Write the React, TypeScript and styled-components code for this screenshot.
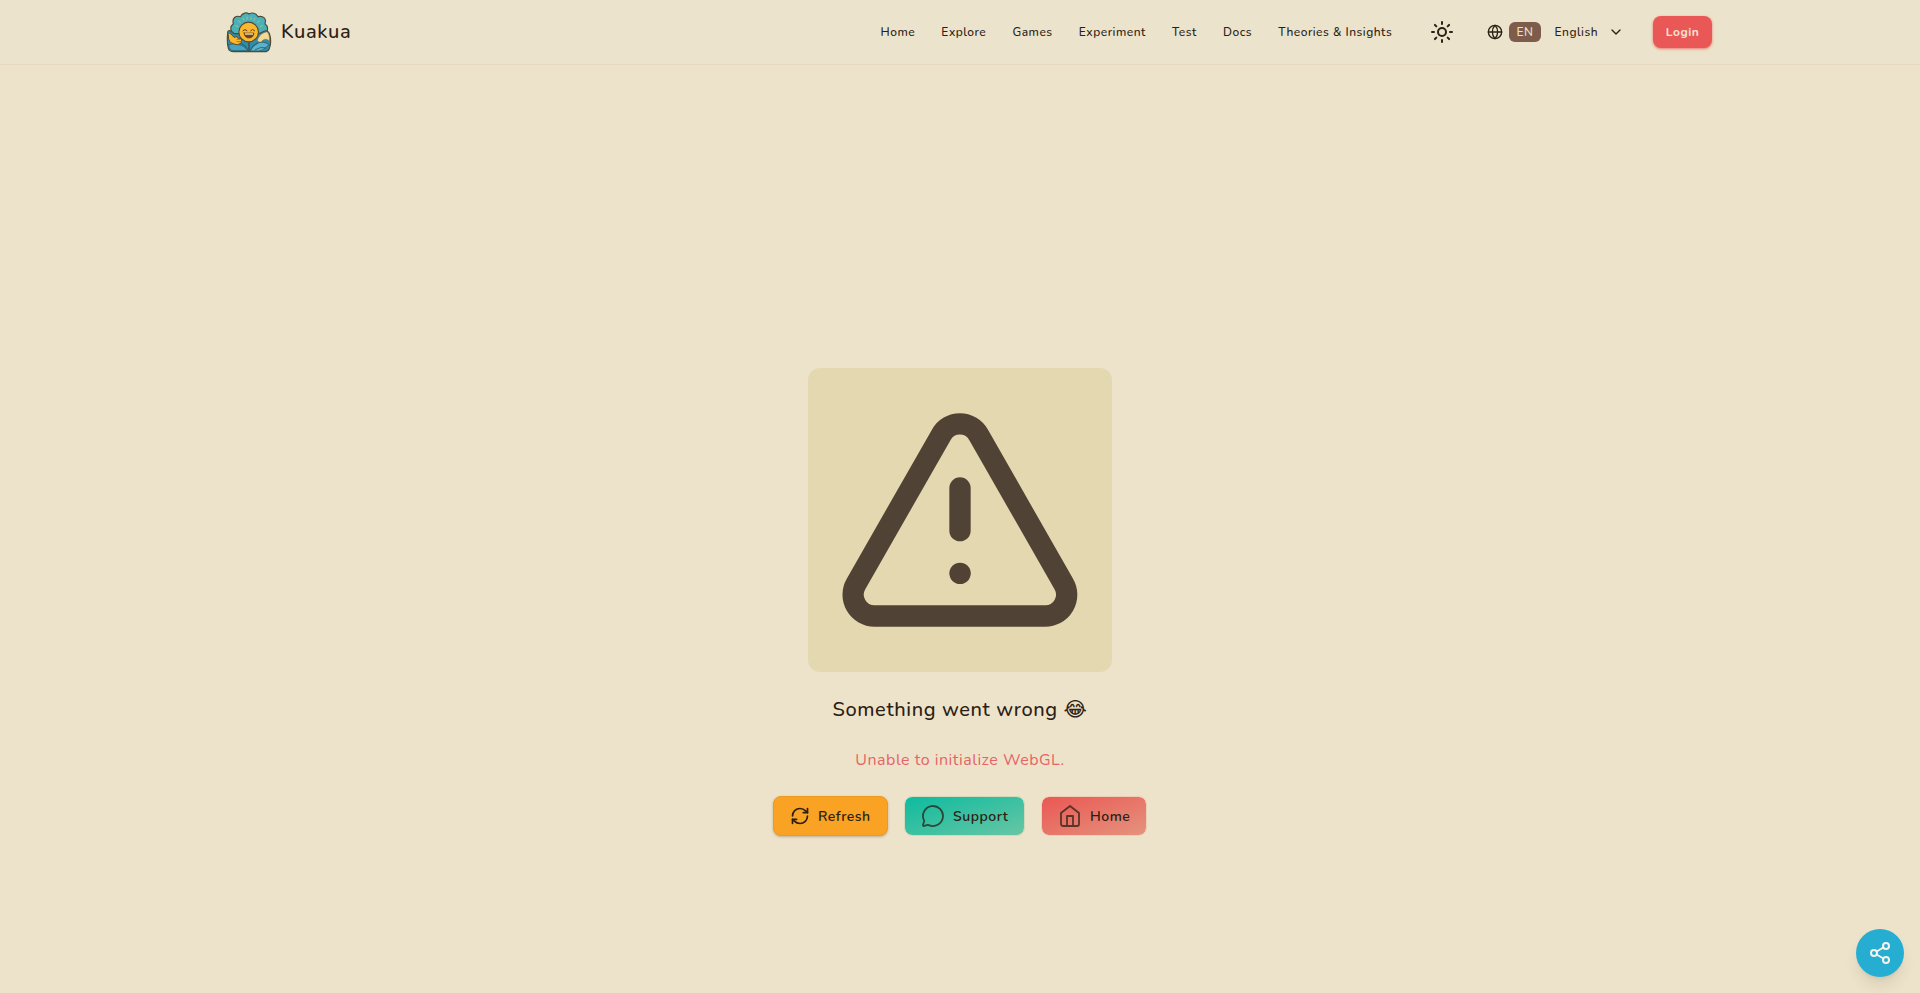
import React from "react";
import styled, { createGlobalStyle, css } from "styled-components";
import {
  ChevronDown,
  Globe,
  MessageCircle,
  RefreshCw,
  Share2,
  Sun,
  TriangleAlert,
} from "lucide-react";

const GlobalStyle = createGlobalStyle`
  *, *::before, *::after { box-sizing: border-box; }
  body {
    margin: 0;
    background: #ede3ca;
    color: #2b2013;
    font-family: Nunito, "Noto Sans", sans-serif;
    letter-spacing: 0.5px;
    overflow: hidden;
  }
  svg { display: block; flex-shrink: 0; }
`;

const Page = styled.div`
  display: flex;
  flex-direction: column;
  height: 100vh;
`;

const Header = styled.header`
  height: 65px;
  flex-shrink: 0;
  display: flex;
  align-items: center;
  justify-content: space-between;
  padding: 0 208px 0 226px;
  background: #ebe3cb;
  border-bottom: 1px solid #e5d8bf;
`;

const Brand = styled.a`
  display: flex;
  align-items: center;
  gap: 9px;
  font-size: 20px;
  line-height: 28px;
  font-weight: 500;
  letter-spacing: 0.6px;
`;

const HeaderEnd = styled.div`
  display: flex;
  align-items: center;
`;

const Nav = styled.nav`
  display: flex;
  gap: 26.2px;
`;

const NavLink = styled.a`
  font-size: 12px;
  line-height: 16px;
  font-weight: 500;
  white-space: nowrap;
`;

const ThemeButton = styled.button`
  display: flex;
  padding: 0;
  margin-left: 37.8px;
  border: 0;
  background: none;
  color: inherit;
`;

const LanguageButton = styled.button`
  display: flex;
  align-items: center;
  margin-left: 33px;
  padding: 0;
  border: 0;
  background: none;
  color: inherit;
  font: inherit;
  letter-spacing: inherit;
  font-size: 12px;
  line-height: 16px;
  font-weight: 500;
`;

const LanguageCode = styled.span`
  width: 32px;
  height: 20px;
  margin: 0 13.5px 0 6px;
  border-radius: 6px;
  background: #7d5c4b;
  color: #ece0cc;
  font-weight: 500;
  line-height: 20px;
  text-align: center;
`;

const LanguageName = styled.span`
  width: 53.5px;
  text-align: left;
`;

const LoginButton = styled.button`
  width: 59px;
  height: 32px;
  margin-left: 29px;
  padding: 0;
  border: 0;
  border-radius: 8px;
  background: #ea5757;
  box-shadow: 0 1px 3px rgba(234, 87, 87, 0.45), 0 1px 2px rgba(234, 87, 87, 0.4);
  color: #f7e4d3;
  font: inherit;
  letter-spacing: inherit;
  font-size: 12px;
  font-weight: 700;
`;

const Main = styled.main`
  flex: 1;
  display: flex;
  flex-direction: column;
  align-items: center;
  padding-top: 303px;
`;

const AlertPanel = styled.div`
  padding: 24px;
  border-radius: 12px;
  background: #e4d8b1;
  color: #504335;
`;

const Title = styled.h1`
  margin: 24px 0 0;
  height: 28px;
  font-size: 20px;
  line-height: 26px;
  font-weight: 500;
  letter-spacing: 0.6px;
`;

const Emoji = styled.span`
  font-family: "DejaVu Sans", sans-serif;
  font-weight: 400;
`;

const Message = styled.p`
  margin: 24px 0;
  font-size: 16px;
  line-height: 24px;
  color: #e56565;
`;

const Actions = styled.div`
  display: flex;
  gap: 16px;
`;

const tones = {
  refresh: css`
    background: #f9a223;
    border-color: #eb9a24;
    box-shadow: 0 1px 3px rgba(90, 60, 20, 0.18), 0 1px 2px rgba(90, 60, 20, 0.14);
  `,
  support: css`
    background: linear-gradient(to bottom right, #0dbb9f, #68c6a4) padding-box;
    border-color: #d3d9b9;
  `,
  home: css`
    background: linear-gradient(to bottom right, #ea5753, #e5937e) padding-box;
    border-color: #ecd0b5;
  `,
};

const ActionButton = styled.button<{ $tone: keyof typeof tones; $width: number }>`
  width: ${(p) => p.$width}px;
  height: 40px;
  display: flex;
  align-items: center;
  gap: 8px;
  padding: 0 0 0 16px;
  border: 1px solid;
  border-radius: 8px;
  color: #2b2013;
  font: inherit;
  letter-spacing: inherit;
  font-size: 14px;
  font-weight: 600;
  ${(p) => tones[p.$tone]}
  svg { opacity: ${(p) => (p.$tone === "refresh" ? 1 : 0.75)}; }
`;

const ShareButton = styled.button`
  position: fixed;
  right: 16px;
  bottom: 16px;
  width: 48px;
  height: 48px;
  display: flex;
  align-items: center;
  justify-content: center;
  border: 0;
  border-radius: 50%;
  background: #25aed2;
  color: #f5f3e9;
  box-shadow: 0 10px 15px -3px rgba(60, 45, 20, 0.12), 0 4px 6px -4px rgba(60, 45, 20, 0.12);
`;

const Logo = () => (
  <svg width="46" height="42" viewBox="34 32 138 126" strokeLinejoin="round" strokeLinecap="round">
    <path
      d="M58 100C45 94 46 77 56 70C51 53 64 45 77 49C84 37 96 35 103 41C112 35 124 38 130 49C144 45 157 54 151 70C161 77 162 94 150 100Z"
      fill="#4bb0b8" stroke="#4d4a37" strokeWidth="3.4"
    />
    <g stroke="#b5c98f" strokeWidth="2.4" fill="none">
      <path d="M97 50v7M109 50v7M85 53l3 7M121 53l-3 7M71 61l6 6M135 61l-6 6M63 76l6 3M143 76l-6 3" />
    </g>
    <path
      d="M39 98Q38 90 46 91L58 100H132L150 92Q164 90 166 106Q171 126 164 145Q160 154 149 154H57Q44 154 41 144Q36 124 39 98Z"
      fill="#2d8dab" stroke="#4d4a37" strokeWidth="3.4"
    />
    <path d="M131 113Q138 98 157 94Q166 102 164 122Q150 109 138 127L128 122Z" fill="#f5d894" stroke="#7a673f" strokeWidth="1.6" />
    <path d="M106 151Q116 134 130 128Q146 121 166 134Q158 135 153 142Q146 150 134 152Z" fill="#5cb2c8" stroke="#315c6b" strokeWidth="2.4" />
    <path d="M42 134Q56 127 71 133Q90 135 99 151H56Q43 150 42 134Z" fill="#46a4c3" stroke="#315c6b" strokeWidth="2.4" />
    <path d="M78 128Q92 132 101 150M129 128Q115 132 106 150M122 148Q137 138 152 142" fill="none" stroke="#285766" strokeWidth="2.4" />
    <circle cx="102" cy="95" r="29.5" fill="#fab82e" stroke="#5d482b" strokeWidth="3.4" />
    <path d="M85 91q6-8 12 0M108 91q6-8 12 0" fill="none" stroke="#5d3d20" strokeWidth="3" />
    <path d="M88 98H118Q116 113 103 113Q90 113 88 98Z" fill="#70411f" stroke="#5d3d20" strokeWidth="2" />
    <path d="M91 99H115V103H91Z" fill="#f8e8c6" />
    <path d="M103 127V152" stroke="#4d4a37" strokeWidth="4" />
    <path
      d="M41 101Q44 94 49 101L58 111L63 110Q67 106 69 113L79 115Q85 119 79 123Q82 129 76 130Q70 136 58 131Q44 129 42 117Z"
      fill="#fab82e" stroke="#5d482b" strokeWidth="3"
    />
    <path d="M67 117H77M67 124H76" stroke="#7b5526" strokeWidth="2" />
  </svg>
);

const HomeIcon = () => (
  <svg
    width="24" height="24" viewBox="0 0 24 24" fill="none" stroke="currentColor"
    strokeWidth="1.8" strokeLinecap="round" strokeLinejoin="round"
  >
    <path d="m3 9 9-7 9 7v11a2 2 0 0 1-2 2H5a2 2 0 0 1-2-2z" />
    <path d="M9 22V12h6v10" />
  </svg>
);

const links = ["Home", "Explore", "Games", "Experiment", "Test", "Docs", "Theories & Insights"];

export default function App() {
  return (
    <Page>
      <GlobalStyle />
      <Header>
        <Brand>
          <Logo />
          Kuakua
        </Brand>
        <HeaderEnd>
          <Nav>
            {links.map((label) => (
              <NavLink key={label}>{label}</NavLink>
            ))}
          </Nav>
          <ThemeButton aria-label="Toggle theme">
            <Sun size={24} />
          </ThemeButton>
          <LanguageButton>
            <Globe size={16} />
            <LanguageCode>EN</LanguageCode>
            <LanguageName>English</LanguageName>
            <ChevronDown size={16} />
          </LanguageButton>
          <LoginButton>Login</LoginButton>
        </HeaderEnd>
      </Header>
      <Main>
        <AlertPanel>
          <TriangleAlert size={256} />
        </AlertPanel>
        <Title>
          Something went wrong <Emoji>😂</Emoji>
        </Title>
        <Message>Unable to initialize WebGL.</Message>
        <Actions>
          <ActionButton $tone="refresh" $width={115}>
            <RefreshCw size={20} />
            Refresh
          </ActionButton>
          <ActionButton $tone="support" $width={121}>
            <MessageCircle size={24} strokeWidth={1.8} />
            Support
          </ActionButton>
          <ActionButton $tone="home" $width={106}>
            <HomeIcon />
            Home
          </ActionButton>
        </Actions>
      </Main>
      <ShareButton aria-label="Share">
        <Share2 size={24} />
      </ShareButton>
    </Page>
  );
}
